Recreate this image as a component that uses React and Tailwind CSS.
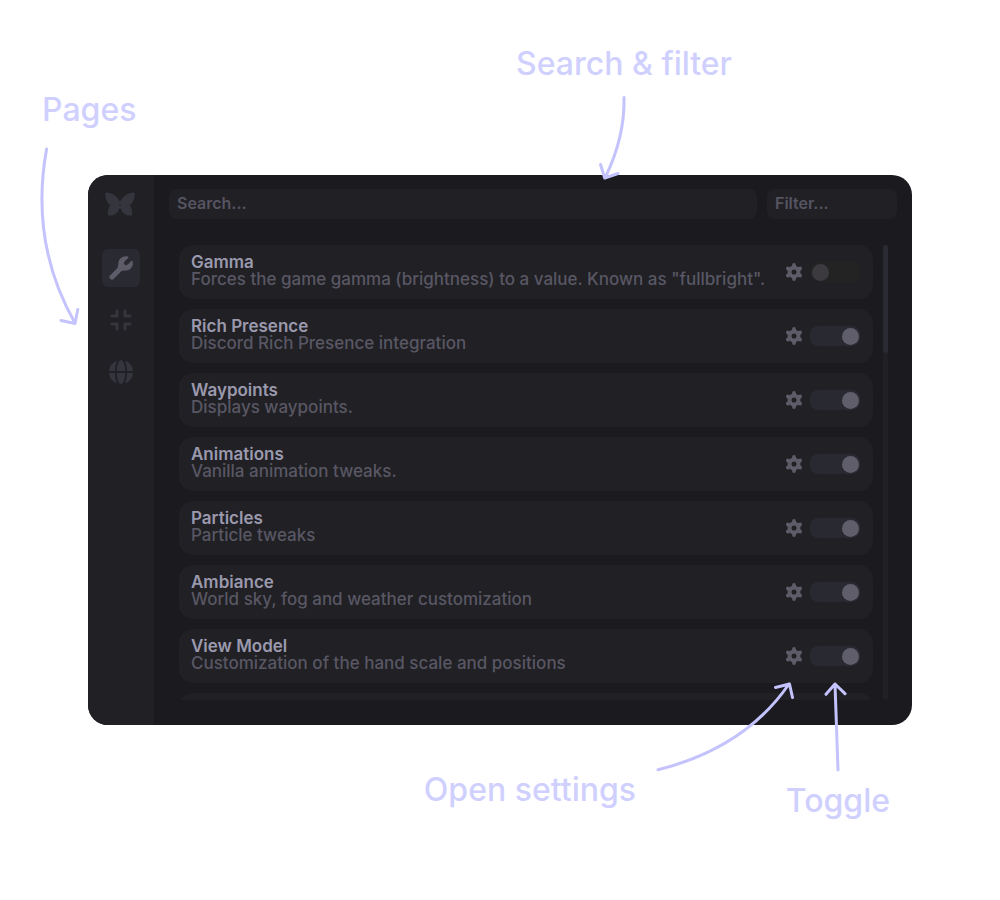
import React, { useState } from "react";

const MODULES = [
  { name: "Gamma", text: 'Forces the game gamma (brightness) to a value. Known as "fullbright".', on: false },
  { name: "Rich Presence", text: "Discord Rich Presence integration", on: true },
  { name: "Waypoints", text: "Displays waypoints.", on: true },
  { name: "Animations", text: "Vanilla animation tweaks.", on: true },
  { name: "Particles", text: "Particle tweaks", on: true },
  { name: "Ambiance", text: "World sky, fog and weather customization", on: true },
  { name: "View Model", text: "Customization of the hand scale and positions", on: true },
];

function Butterfly() {
  return (
    <svg viewBox="0 0 30 24" className="h-6 w-[30px] text-[#35353d]" fill="currentColor" aria-hidden="true">
      <path d="M14.6 9.2C12.5 4.6 6.5.6 1.6.6.6.6.2 1.2.2 2.2.5 7 2 11.2 5.6 13.3 3.6 14.6 2.8 18 3 22.2c0 .9.5 1.3 1.3 1.3 5 .2 8.7-2.6 10.3-7.5Z" />
      <path d="M15.4 9.2C17.5 4.6 23.5.6 28.4.6c1 0 1.4.6 1.4 1.6-.3 4.8-1.8 9-5.4 11.1 2 1.3 2.8 4.7 2.6 8.9 0 .9-.5 1.3-1.3 1.3-5 .2-8.7-2.6-10.3-7.5Z" />
      <path d="M14 9h2v2.5h-2zM14 13.5h2V16h-2z" />
    </svg>
  );
}

function Wrench() {
  return (
    <svg viewBox="0 0 24 24" className="size-6" aria-hidden="true">
      <path d="M3 21 13 11" stroke="currentColor" strokeWidth="5.2" strokeLinecap="round" />
      <path
        fill="currentColor"
        d="M18.8.6A7.4 7.4 0 0 0 9.300 8.600c0 .8-.2 1.500-.8 2l4.500 4.600c.6-.5 1.300-.7 2.200-.7A7.400 7.400 0 0 0 23.600 5.300c-.2-.7-.8-.8-1.300-.3l-3.600 3.600c-1 .9-2.300.9-3.200-.1-.9-.9-.9-2 .1-2.900L19.100 1.900c.5-.5.4-1.100-.3-1.300Z"
      />
    </svg>
  );
}

function Compress() {
  return (
    <svg viewBox="0 0 24 24" className="size-6" fill="none" stroke="currentColor" strokeWidth="3" strokeLinecap="round" aria-hidden="true">
      <path d="M8 3v5H3M16 3v5h5M8 21v-5H3M16 21v-5h5" />
    </svg>
  );
}

function Globe() {
  return (
    <svg viewBox="0 0 24 24" className="size-6" fill="currentColor" aria-hidden="true">
      <path d="M8 .7A12 12 0 0 0 0 11h6C6 7 6.7 3.4 8 .7ZM16 .7A12 12 0 0 1 24 11h-6c0-4-.7-7.600-2-10.300ZM8 23.300A12 12 0 0 1 0 13h6c0 4 .7 7.600 2 10.300ZM16 23.300A12 12 0 0 0 24 13h-6c0 4-.7 7.600-2 10.300ZM7.700 11C7.800 5 9.800 0 12 0s4.200 5 4.300 11ZM7.700 13c.1 6 2.100 11 4.300 11s4.200-5 4.300-11Z" />
    </svg>
  );
}

function Gear() {
  return (
    <svg viewBox="0 0 18 18" className="size-[18px]" fill="none" stroke="currentColor" aria-hidden="true">
      <circle cx="9" cy="9" r="4.5" strokeWidth="3.8" />
      <path
        d="M9 4.5V2M9 13.5V16M5.1 6.750 2.900 5.500M12.900 11.250l2.200 1.250M5.100 11.250l-2.200 1.250M12.900 6.750l2.200-1.250"
        strokeWidth="3.8"
        strokeLinecap="round"
      />
    </svg>
  );
}

function NavButton({ label, active, onClick, children }) {
  return (
    <button
      type="button"
      aria-label={label}
      aria-pressed={active}
      onClick={onClick}
      className={
        active
          ? "flex size-[38px] items-center justify-center rounded-md bg-[#292a32] text-[#5d5c68]"
          : "flex size-[38px] items-center justify-center rounded-md text-[#35353d]"
      }
    >
      {children}
    </button>
  );
}

function ModuleCard({ module }) {
  const [on, setOn] = useState(module.on);
  return (
    <li className="flex h-[54px] shrink-0 items-center rounded-[14px] bg-[#202025] pr-[13px] pl-3">
      <div className="min-w-0 flex-1 pb-[2px] text-[17px] leading-[17px] whitespace-nowrap">
        <h2 className="font-semibold text-[#9b99ad]">{module.name}</h2>
        <p className="font-medium text-[#595763]">{module.text}</p>
      </div>
      <button type="button" aria-label={`${module.name} settings`} className="mr-[7px] text-[#5d5c68]">
        <Gear />
      </button>
      <input
        type="checkbox"
        role="switch"
        aria-label={module.name}
        checked={on}
        onChange={(e) => setOn(e.target.checked)}
        className="flex h-5 w-[50px] appearance-none items-center rounded-lg bg-[#232324] pr-px pl-[2px] before:size-[17px] before:rounded-full before:bg-[#3c3a3f] checked:justify-end checked:bg-[#292a31] checked:before:bg-[#605e6b]"
      />
    </li>
  );
}

function Arrow({ className, viewBox, d }) {
  return (
    <svg
      className={className}
      viewBox={viewBox}
      fill="none"
      stroke="#c4c3fd"
      strokeWidth="3"
      strokeLinecap="round"
      strokeLinejoin="round"
      aria-hidden="true"
    >
      <path d={d} />
    </svg>
  );
}

const LABEL = "absolute text-[32px] leading-10 font-medium whitespace-nowrap text-[#d0d0ff]";
const FIELD =
  "h-[30px] rounded-lg bg-[#202025] px-2 pb-[2px] font-semibold text-[#9b99ad] outline-none placeholder:text-[#565460]";

export default function App() {
  const [page, setPage] = useState("modules");
  return (
    <div className="min-h-screen bg-white px-[88px] py-[175px] font-['Inter',sans-serif] text-base">
      <div className="relative">
        <main className="flex overflow-hidden rounded-[20px] bg-[#1b1a1f]">
          <nav className="flex w-[66px] shrink-0 flex-col items-center bg-[#202025] pt-[17px]">
            <div className="mr-[2px] mb-[33px]">
              <Butterfly />
            </div>
            <div className="flex flex-col gap-[14px]">
              <NavButton label="Modules" active={page === "modules"} onClick={() => setPage("modules")}>
                <Wrench />
              </NavButton>
              <NavButton label="HUD" active={page === "hud"} onClick={() => setPage("hud")}>
                <Compress />
              </NavButton>
              <NavButton label="Web" active={page === "web"} onClick={() => setPage("web")}>
                <Globe />
              </NavButton>
            </div>
          </nav>
          <div className="min-w-0 flex-1 px-[15px] pt-[14px] pb-[25px]">
            <div className="flex gap-[10px]">
              <input type="text" aria-label="Search" placeholder="Search..." className={`${FIELD} min-w-0 flex-1`} />
              <input type="text" aria-label="Filter" placeholder="Filter..." className={`${FIELD} w-[130px]`} />
            </div>
            <div className="mt-[26px] flex h-[455px] gap-[10px] pr-[9px] pl-[10px]">
              <ul className="flex min-w-0 flex-1 flex-col gap-[10px] overflow-hidden">
                {MODULES.map((m) => (
                  <ModuleCard key={m.name} module={m} />
                ))}
                <li className="h-[54px] shrink-0 rounded-[14px] bg-[#202025]" />
              </ul>
              <div className="w-[5px] rounded-sm bg-[#202025]">
                <div className="h-[108px] rounded-sm bg-[#2a2a32]" />
              </div>
            </div>
          </div>
        </main>

        <p className={`${LABEL} -top-[85px] -left-[46px]`}>Pages</p>
        <Arrow
          className="absolute -top-[35px] -left-[58px] h-[195px] w-[60px]"
          viewBox="30 140 60 195"
          d="M46.600 149Q29.500 243 75 323M61 320.500l14 3 2.800-14"
        />

        <p className={`${LABEL} -top-[131px] left-[428px]`}>Search &amp; filter</p>
        <Arrow
          className="absolute -top-[85px] left-[502px] h-[100px] w-[50px]"
          viewBox="590 90 50 100"
          d="M624 97.500Q625 137 605 178M600.500 164.500l4.200 13.500 13.300-4.500"
        />

        <p className={`${LABEL} right-[276px] -bottom-[85px]`}>Open settings</p>
        <Arrow
          className="absolute right-[112px] -bottom-[55px] h-[110px] w-[160px]"
          viewBox="640 670 160 110"
          d="M658 769.800Q745 748 789 684M775.500 687.500l14-3.500 3 13.500"
        />

        <p className={`${LABEL} right-[22px] -bottom-[96px]`}>Toggle</p>
        <Arrow
          className="absolute right-[62px] -bottom-[55px] h-[110px] w-[40px]"
          viewBox="810 670 40 110"
          d="M838 770l-3-86M826 694.300l9-10.300 10 9.700"
        />
      </div>
    </div>
  );
}
